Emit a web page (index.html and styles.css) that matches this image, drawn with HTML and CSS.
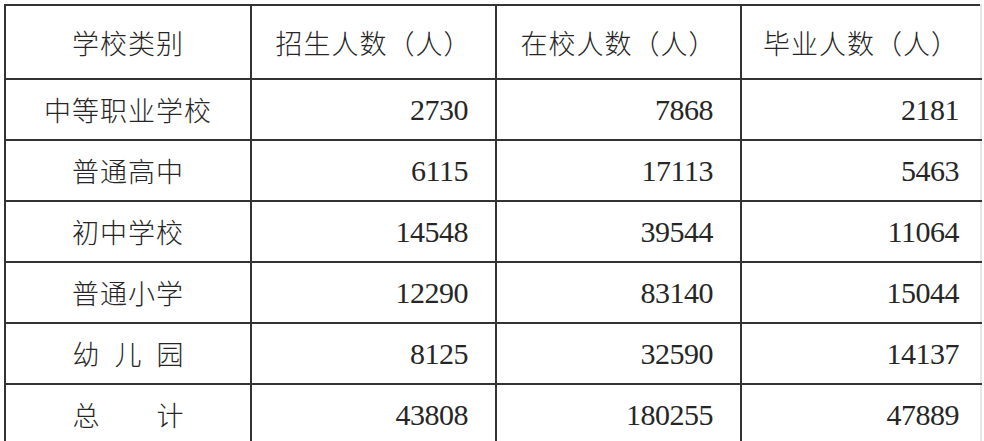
FILE: index.html
```
<!DOCTYPE html>
<html lang="zh-CN">
<head>
<meta charset="utf-8">
<link rel="stylesheet" href="styles.css">
</head>
<body>
<div class="wrap">
<table class="stats">
<colgroup>
<col class="c1"><col class="c2"><col class="c3"><col class="c4">
</colgroup>
<thead>
<tr class="head">
<th>学校类别</th>
<th>招生人数（人）</th>
<th>在校人数（人）</th>
<th>毕业人数（人）</th>
</tr>
</thead>
<tbody>
<tr><td class="name">中等职业学校</td><td class="num">2730</td><td class="num">7868</td><td class="num last">2181</td></tr>
<tr><td class="name">普通高中</td><td class="num">6115</td><td class="num">17113</td><td class="num last">5463</td></tr>
<tr><td class="name">初中学校</td><td class="num">14548</td><td class="num">39544</td><td class="num last">11064</td></tr>
<tr><td class="name">普通小学</td><td class="num">12290</td><td class="num">83140</td><td class="num last">15044</td></tr>
<tr><td class="name"><span class="spread">幼 儿 园</span></td><td class="num">8125</td><td class="num">32590</td><td class="num last">14137</td></tr>
<tr><td class="name"><span class="spread">总 计</span></td><td class="num">43808</td><td class="num">180255</td><td class="num last">47889</td></tr>
</tbody>
</table>
</div>
</body>
</html>
```
FILE: styles.css
```
html, body {
  margin: 0;
  padding: 0;
  background: #ffffff;
  overflow: hidden;
}
.wrap {
  padding: 4px 0 0 4px;
}
.stats {
  border-collapse: collapse;
  table-layout: fixed;
  width: 976px;
  color: #262626;
}
.c1 { width: 246px; }
.c2 { width: 245px; }
.c3 { width: 245px; }
.c4 { width: 240px; }
.stats th, .stats td {
  border: 2px solid #333333;
  padding: 0;
  height: 59px;
  font-family: "Noto Sans CJK SC", sans-serif;
  font-weight: 200;
  font-size: 27px;
  letter-spacing: 1px;
  text-align: center;
  vertical-align: middle;
}
.stats th:last-child, .stats td:last-child {
  border-right-color: #e6e6e6;
}
.stats .head th {
  height: 72px;
}
.stats td.num {
  font-family: "Liberation Serif", "DejaVu Serif", serif;
  font-weight: 400;
  font-size: 30px;
  letter-spacing: -0.5px;
  text-align: right;
  padding-right: 27px;
}
.stats td.num.last {
  padding-right: 21px;
}
.spread {
  display: inline-block;
  width: 111px;
  text-align: justify;
  text-align-last: justify;
  letter-spacing: 0;
}
```
